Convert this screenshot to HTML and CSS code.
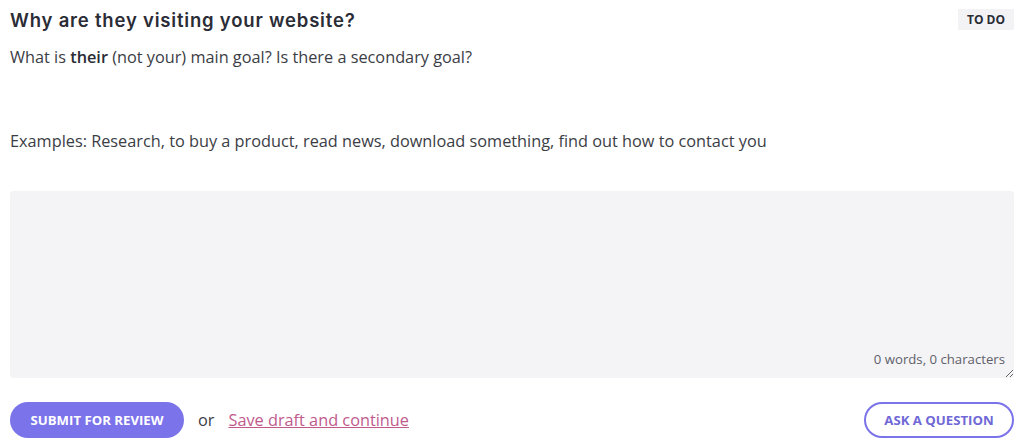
FILE: index.html
```html
<!DOCTYPE html>
<html lang="en">
<head>
  <meta charset="UTF-8" />
  <title>Task</title>
  <link rel="stylesheet" href="styles.css">
</head>
<body>
  <div class="task">
    <div class="task-head">
      <h2 class="task-title">Why are they visiting your website?</h2>
      <span class="badge">TO DO</span>
    </div>
    <p class="question">What is <b>their</b> (not your) main goal? Is there a secondary goal?</p>
    <p class="examples">Examples: Research, to buy a product, read news, download something, find out how to contact you</p>
    <div class="answer">
      <textarea class="answer-input"></textarea>
      <span class="counter">0 words, 0 characters</span>
    </div>
    <div class="actions">
      <button class="btn-submit">SUBMIT FOR REVIEW</button>
      <span class="or">or</span>
      <a class="draft" href="#">Save draft and continue</a>
      <button class="btn-ask">ASK A QUESTION</button>
    </div>
  </div>
</body>
</html>
```

FILE: styles.css
```css
* { margin: 0; padding: 0; box-sizing: border-box; }
body {
  font-family: 'Open Sans', sans-serif;
  background: #fff;
  color: #3b3d45;
}
.task {
  padding: 8px 10px 0 10px;
}
.task-head {
  display: flex;
  justify-content: space-between;
  align-items: flex-start;
}
.task-title {
  font-family: Inter, sans-serif;
  font-size: 18.5px;
  font-weight: 600;
  color: #2a2c36;
  letter-spacing: 0.8px;
  line-height: 24px;
}
.badge {
  background: #f3f3f5;
  font-size: 12px;
  font-weight: 700;
  color: #2a2c36;
  padding: 2px 9px;
  line-height: 17px;
  margin-top: 1px;
}
.question {
  font-size: 16.3px;
  line-height: 22px;
  margin-top: 14px;
}
.question b { font-weight: 600; color: #2a2c36; }
.examples {
  font-size: 16.3px;
  line-height: 22px;
  margin-top: 62px;
}
.answer {
  position: relative;
  margin-top: 39px;
}
.answer-input {
  display: block;
  width: 100%;
  height: 187px;
  border: none;
  border-radius: 4px;
  background: #f4f4f6;
  resize: vertical;
  font-family: inherit;
}
.counter {
  position: absolute;
  right: 9px;
  bottom: 10px;
  font-size: 13.2px;
  color: #5f616a;
}
.actions {
  display: flex;
  align-items: center;
  margin-top: 24px;
}
.btn-submit {
  background: #7b73ea;
  color: #fff;
  border: none;
  border-radius: 18px;
  height: 36px;
  width: 174px;
  font-family: inherit;
  font-size: 13.2px;
  font-weight: 700;
}
.or {
  margin-left: 14px;
  font-size: 16.3px;
}
.draft {
  margin-left: 14px;
  color: #c05a8d;
  font-size: 16.3px;
}
.btn-ask {
  margin-left: auto;
  background: #fff;
  color: #6f68d6;
  border: 2px solid #7b73ea;
  border-radius: 18px;
  height: 36px;
  width: 150px;
  font-family: inherit;
  font-size: 13.2px;
  font-weight: 700;
}
```
